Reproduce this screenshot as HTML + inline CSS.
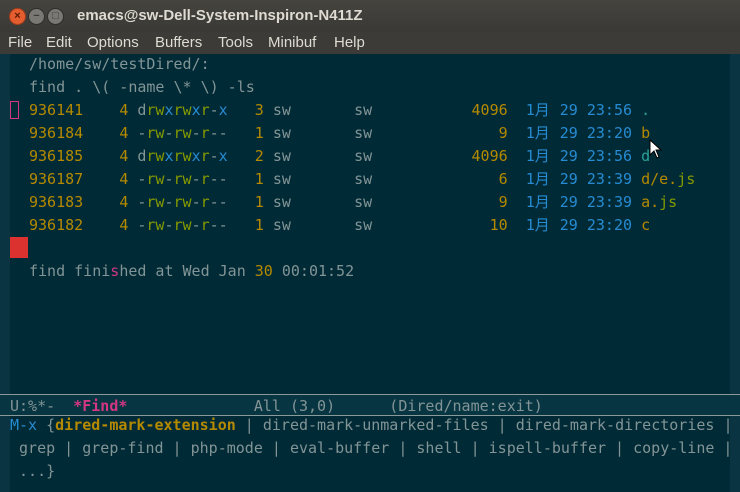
<!DOCTYPE html>
<html><head><meta charset="utf-8"><style>
*{margin:0;padding:0;box-sizing:border-box}
body{width:740px;height:492px;overflow:hidden;background:#002b36;position:relative;font-family:"DejaVu Sans Mono","Liberation Mono",monospace}
#title{position:absolute;left:0;top:0;width:740px;height:32px;background:linear-gradient(#45443f,#3a3935);}
#title .t{position:absolute;left:77px;top:7px;color:#dfdbd2;font:bold 15px "Liberation Sans",sans-serif}
.b{position:absolute;top:8px;width:17px;height:17px;border-radius:50%;background:#7a7873;border:1px solid #2f2e2b;color:#3c3b37;font:bold 11px "Liberation Sans",sans-serif;text-align:center;line-height:15px}
#menu{position:absolute;left:0;top:32px;width:740px;height:22px;background:#3c3b37;color:#dfdbd2;font:15px "Liberation Sans",sans-serif}
#menu span{position:absolute;top:2px}
.fr{position:absolute;top:54px;width:10px;height:340px;background:#0a3441}
pre{position:absolute;left:29px;font-size:15px;line-height:23px;color:#839496;white-space:pre}
.y{color:#b58900}.bl{color:#268bd2}.g{color:#859900}.c{color:#2aa198}.m{color:#d33682}
.k{display:inline-block;width:16px;font-family:"Noto Sans CJK SC",sans-serif;font-size:15px;line-height:15px}
#ml{position:absolute;left:0;top:394px;width:740px;height:22px;background:#073642;border:1px solid #8a9a9a;border-left:0;border-right:0}
#mb{position:absolute;left:0;top:416px;width:740px;height:76px;background:#002b36}
</style></head><body>
<div id="title"><div class="b" style="left:9px;background:#e45d2f;border-color:#a53d1a;color:#5a1a05">×</div><div class="b" style="left:28px">−</div><div class="b" style="left:47px">□</div><span class="t">emacs@sw-Dell-System-Inspiron-N411Z</span></div>
<div id="menu"><span style="left:8px">File</span><span style="left:46px">Edit</span><span style="left:87px">Options</span><span style="left:155px">Buffers</span><span style="left:218px">Tools</span><span style="left:268px">Minibuf</span><span style="left:334px">Help</span></div>
<div class="fr" style="left:0"></div><div class="fr" style="left:730px"></div>
<pre style="top:53px">/home/sw/testDired/:
find . \( -name \* \) -ls
<span class="y">936141</span>    <span class="y">4</span> d<span class="g">rw</span><span class="bl">x</span><span class="g">rw</span><span class="bl">x</span><span class="g">r</span>-<span class="bl">x</span>   <span class="y">3</span> sw       sw           <span class="y">4096</span>  <span class="bl">1<span class="k">月</span> 29 23:56</span> <span class="c">.</span>
<span class="y">936184</span>    <span class="y">4</span> -<span class="g">rw</span>-<span class="g">rw</span>-<span class="g">r</span>--   <span class="y">1</span> sw       sw              <span class="y">9</span>  <span class="bl">1<span class="k">月</span> 29 23:20</span> <span class="y">b</span>
<span class="y">936185</span>    <span class="y">4</span> d<span class="g">rw</span><span class="bl">x</span><span class="g">rw</span><span class="bl">x</span><span class="g">r</span>-<span class="bl">x</span>   <span class="y">2</span> sw       sw           <span class="y">4096</span>  <span class="bl">1<span class="k">月</span> 29 23:56</span> <span class="c">d</span>
<span class="y">936187</span>    <span class="y">4</span> -<span class="g">rw</span>-<span class="g">rw</span>-<span class="g">r</span>--   <span class="y">1</span> sw       sw              <span class="y">6</span>  <span class="bl">1<span class="k">月</span> 29 23:39</span> <span class="y">d/e.</span><span class="g">js</span>
<span class="y">936183</span>    <span class="y">4</span> -<span class="g">rw</span>-<span class="g">rw</span>-<span class="g">r</span>--   <span class="y">1</span> sw       sw              <span class="y">9</span>  <span class="bl">1<span class="k">月</span> 29 23:39</span> <span class="y">a.</span><span class="g">js</span>
<span class="y">936182</span>    <span class="y">4</span> -<span class="g">rw</span>-<span class="g">rw</span>-<span class="g">r</span>--   <span class="y">1</span> sw       sw             <span class="y">10</span>  <span class="bl">1<span class="k">月</span> 29 23:20</span> <span class="y">c</span>

find fini<span class="m">s</span>hed at Wed Jan <span class="y">30</span> 00:01:52</pre>
<div style="position:absolute;left:10px;top:101px;width:9px;height:18px;border:1px solid #d33682"></div>
<div style="position:absolute;left:10px;top:237px;width:18px;height:21px;background:#dc322f"></div>
<div id="ml"></div>
<pre style="top:395px;left:10px">U:%*-  <b class="m">*Find*</b>              All (3,0)      (Dired/name:exit)</pre>
<div id="mb"></div>
<div style="position:absolute;left:0;top:416px;width:10px;height:76px;background:#0a3441"></div>
<div style="position:absolute;left:730px;top:416px;width:10px;height:76px;background:#0a3441"></div>
<pre style="top:414px;left:10px"><span class="bl">M-x</span> {<b class="y">dired-mark-extension</b> | dired-mark-unmarked-files | dired-mark-directories |
 grep | grep-find | php-mode | eval-buffer | shell | ispell-buffer | copy-line |
 ...}</pre>
<svg style="position:absolute;left:649px;top:139px" width="14" height="20" viewBox="0 0 14 20"><path d="M1 1 L1 16 L5 12 L8 19 L10 18 L7 11 L12 11 Z" fill="#fff" stroke="#000" stroke-width="1"/></svg>
</body></html>
